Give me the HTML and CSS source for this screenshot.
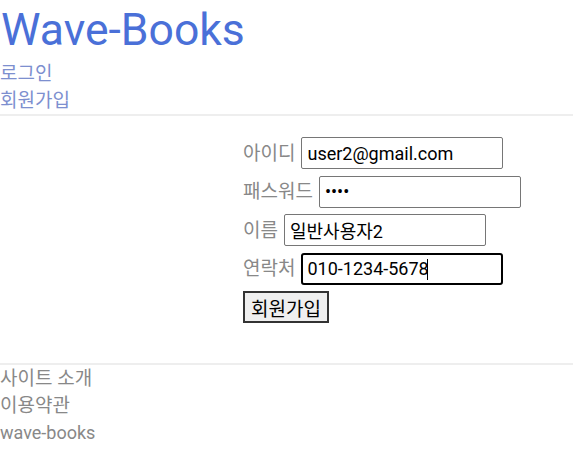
FILE: index.html
```html
<!DOCTYPE html>
<html lang="ko">
<head>
<meta charset="utf-8">
<title>Wave-Books</title>
<link rel="stylesheet" href="styles.css">
</head>
<body>
<header class="site-header">
  <h1 class="logo"><a href="#">Wave-Books</a></h1>
  <nav class="nav">
    <a href="#" class="nav-link">로그인</a>
    <a href="#" class="nav-link">회원가입</a>
  </nav>
</header>
<main class="main">
  <form class="join-form">
    <div class="row"><label class="label">아이디</label><input class="field" type="text" value="user2@gmail.com"></div>
    <div class="row"><label class="label">패스워드</label><input class="field" type="password" value="1234"></div>
    <div class="row"><label class="label">이름</label><input class="field" type="text" value="일반사용자2"></div>
    <div class="row"><label class="label">연락처</label><input class="field focused" type="text" value="010-1234-5678"><span class="caret"></span></div>
    <div class="row"><button class="submit" type="button">회원가입</button></div>
  </form>
</main>
<footer class="site-footer">
  <a href="#" class="foot-link">사이트 소개</a>
  <a href="#" class="foot-link">이용약관</a>
  <span class="copy">wave-books</span>
</footer>
</body>
</html>
```
FILE: styles.css
```css
html, body {
  margin: 0;
  padding: 0;
  background: #fff;
}
body {
  font-family: Roboto, "Noto Sans CJK KR", sans-serif;
  font-size: 18px;
  line-height: 27px;
  color: #888;
}
a { text-decoration: none; }
.site-header {
  border-bottom: 2px solid #eeeeee;
}
.logo {
  margin: 0;
  padding-left: 1px;
  font-size: 44.5px;
  font-weight: 400;
  line-height: 58px;
  padding-top: 1px;
}
.logo a { color: #4a70d8; }
.nav {
  display: flex;
  flex-direction: column;
  padding-top: 1px;
}
.nav-link { color: #7d8fcf; line-height: 27px; font-size: 19px; }
.main {
  padding: 21px 0 40px 243px;
  border-bottom: 2px solid #eeeeee;
}
.join-form {
  display: flex;
  flex-direction: column;
  gap: 6.5px;
}
.row {
  display: flex;
  align-items: center;
  height: 32px;
  position: relative;
}
.label {
  color: #888;
  margin-right: 6px;
  font-size: 19px;
}
.field {
  box-sizing: border-box;
  width: 202px;
  height: 32px;
  border: 1px solid #767676;
  border-radius: 2px;
  padding: 0 5px;
  font-family: Roboto, "Noto Sans CJK KR", sans-serif;
  font-size: 18px;
  color: #000;
  background: #fff;
  outline: none;
}
.field.focused {
  border: 2px solid #000;
  border-radius: 3px;
  padding: 0 4px;
}
.caret {
  position: absolute;
  left: 184px;
  top: 6px;
  width: 1px;
  height: 21px;
  background: #000;
}
.submit {
  box-sizing: border-box;
  height: 32px;
  padding: 0 6px;
  font-family: Roboto, "Noto Sans CJK KR", sans-serif;
  font-size: 19px;
  color: #000;
  background: #efefef;
  border: 2px solid #333;
  border-radius: 0;
}
.site-footer {
  display: flex;
  flex-direction: column;
  line-height: 27px;
}
.foot-link { color: #888; font-size: 19px; }
.copy { color: #888; }
```
